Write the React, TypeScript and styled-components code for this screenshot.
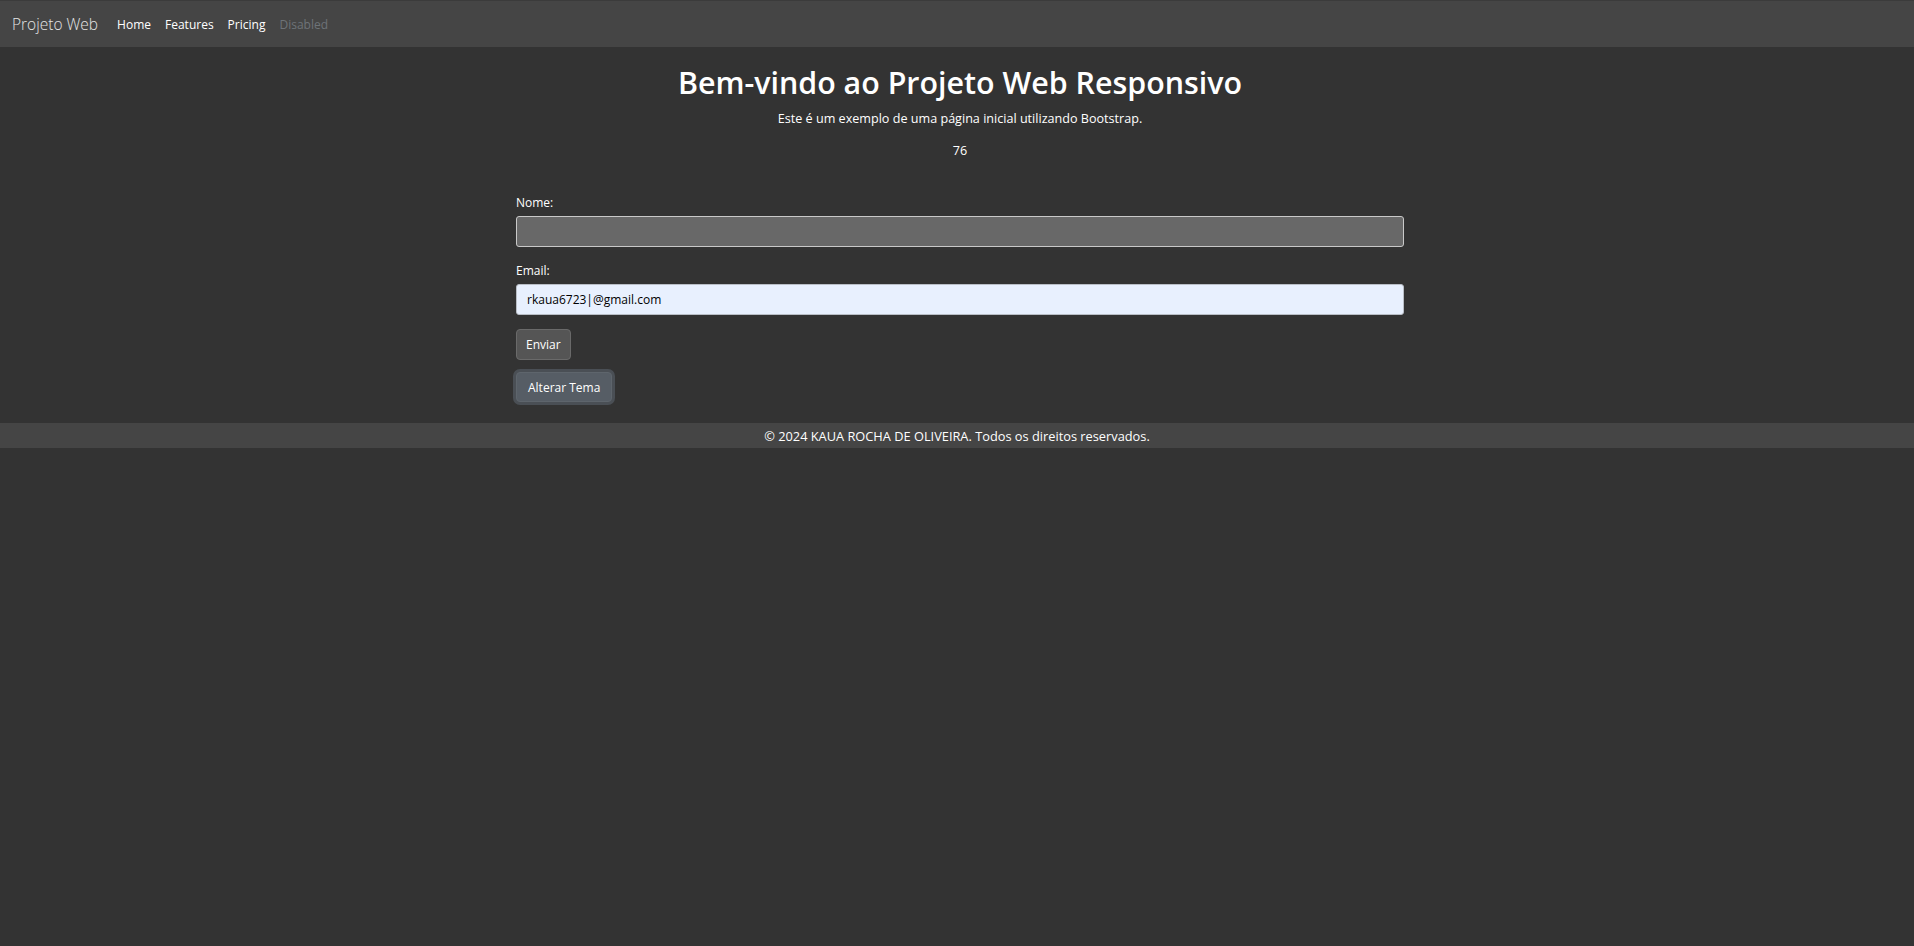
import React from 'react'
import styled, { createGlobalStyle } from 'styled-components'

const GlobalStyle = createGlobalStyle`
  html, body {
    margin: 0;
    padding: 0;
    background: #333333;
    color: #ffffff;
    font-family: 'Open Sans', 'Noto Sans', sans-serif;
  }
  * {
    box-sizing: border-box;
  }
`

const Page = styled.div`
  min-height: 946px;
  background: #333333;
  display: flex;
  flex-direction: column;
`

const Navbar = styled.nav`
  height: 47px;
  background: #454545;
  border-top: 1px solid #3b3b3b;
  display: flex;
  align-items: center;
  padding: 0 12px;
`

const Brand = styled.a`
  font-size: 15.5px;
  font-weight: 300;
  color: #e4e4e4;
  margin-right: 12px;
  text-decoration: none;
`

const NavList = styled.ul`
  display: flex;
  list-style: none;
  margin: 0;
  padding: 0;
`

const NavLink = styled.a<{ $disabled?: boolean }>`
  display: block;
  padding: 0 7px;
  font-size: 12px;
  color: ${p => (p.$disabled ? '#6e7378' : '#ffffff')};
  text-decoration: none;
`

const Main = styled.main`
  width: 888px;
  margin-left: calc(50% - 441px);
  padding-top: 18px;
  display: flex;
  flex-direction: column;
`

const Title = styled.h1`
  margin: 0 0 8px;
  text-align: center;
  font-size: 30.4px;
  font-weight: 600;
  line-height: 1.2;
`

const Lead = styled.p`
  margin: 0 0 13px;
  text-align: center;
  font-size: 12.6px;
  line-height: 19px;
`

const Form = styled.form`
  margin-top: 20px;
  display: flex;
  flex-direction: column;
  align-items: flex-start;
`

const Field = styled.div`
  width: 100%;
  margin-bottom: 14px;
`

const Label = styled.label`
  display: block;
  font-size: 12px;
  line-height: 19px;
  margin-bottom: 4px;
`

const Input = styled.input<{ $filled?: boolean }>`
  display: block;
  width: 100%;
  height: 31px;
  padding: 0 10px;
  font-family: inherit;
  font-size: 12px;
  color: #000000;
  background: ${p => (p.$filled ? '#e8f0fe' : '#686868')};
  border: 1px solid ${p => (p.$filled ? '#b9bec6' : '#c9c9c9')};
  border-radius: 3px;
  outline: none;
`

const Button = styled.button<{ $variant?: 'dark' | 'secondary' }>`
  height: ${p => (p.$variant === 'secondary' ? '30px' : '31px')};
  padding: 0 ${p => (p.$variant === 'secondary' ? '11px' : '9px')};
  font-family: inherit;
  font-size: 12px;
  color: #ffffff;
  border-radius: 4px;
  cursor: pointer;
  background: ${p => (p.$variant === 'secondary' ? '#565d65' : '#555555')};
  border: 1px solid ${p => (p.$variant === 'secondary' ? '#5e656c' : '#6a6a6a')};
  box-shadow: ${p => (p.$variant === 'secondary' ? '0 0 0 3px #4a4f55' : 'none')};
  margin-bottom: ${p => (p.$variant === 'secondary' ? '0' : '9px')};
  margin-top: ${p => (p.$variant === 'secondary' ? '3px' : '0')};
`

const Footer = styled.footer`
  margin-top: 21px;
  height: 25px;
  background: #454545;
  display: flex;
  align-items: center;
  justify-content: center;
  font-size: 12.8px;
`

export default function App() {
  return (
    <Page>
      <GlobalStyle />
      <Navbar>
        <Brand href="#">Projeto Web</Brand>
        <NavList>
          <li><NavLink href="#">Home</NavLink></li>
          <li><NavLink href="#">Features</NavLink></li>
          <li><NavLink href="#">Pricing</NavLink></li>
          <li><NavLink $disabled>Disabled</NavLink></li>
        </NavList>
      </Navbar>
      <Main>
        <Title>Bem-vindo ao Projeto Web Responsivo</Title>
        <Lead>Este é um exemplo de uma página inicial utilizando Bootstrap.</Lead>
        <Lead>76</Lead>
        <Form onSubmit={e => e.preventDefault()}>
          <Field>
            <Label htmlFor="nome">Nome:</Label>
            <Input id="nome" type="text" />
          </Field>
          <Field>
            <Label htmlFor="email">Email:</Label>
            <Input id="email" type="text" $filled defaultValue="rkaua6723|@gmail.com" />
          </Field>
          <Button type="submit" $variant="dark">Enviar</Button>
          <Button type="button" $variant="secondary">Alterar Tema</Button>
        </Form>
      </Main>
      <Footer>© 2024 KAUA ROCHA DE OLIVEIRA. Todos os direitos reservados.</Footer>
    </Page>
  )
}
